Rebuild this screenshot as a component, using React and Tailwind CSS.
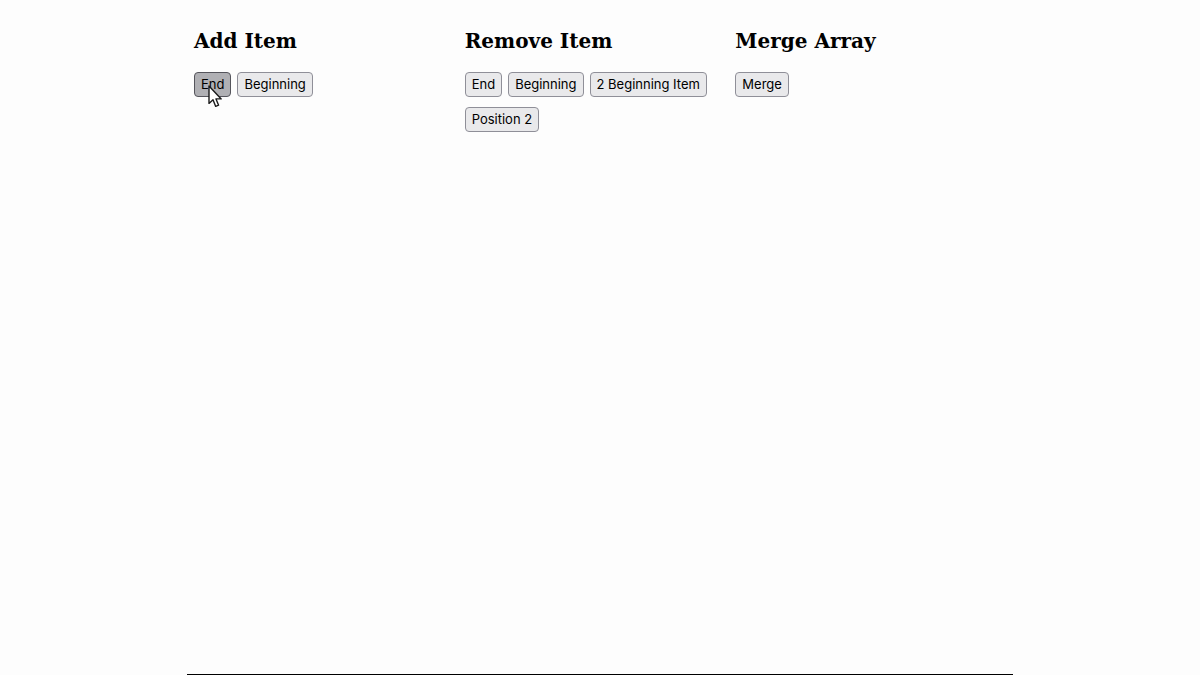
const columns = [
  {
    title: 'Add Item',
    actions: [{ label: 'End', pressed: true }, { label: 'Beginning' }],
  },
  {
    title: 'Remove Item',
    actions: [
      { label: 'End' },
      { label: 'Beginning' },
      { label: '2 Beginning Item' },
      { label: 'Position 2' },
    ],
  },
  {
    title: 'Merge Array',
    actions: [{ label: 'Merge' }],
  },
];

const Pointer = () => (
  <svg
    className="absolute left-[14px] top-[13px] z-10 pointer-events-none"
    width="14"
    height="23"
    viewBox="0 0 14 23"
    aria-hidden="true"
  >
    <path
      d="M1 1V18.4L5 14.8L7.7 21.4L10.6 20.2L8 13.9H13.2Z"
      fill="#fff"
      stroke="#1a1a1a"
      strokeWidth="1.4"
      strokeLinejoin="round"
    />
  </svg>
);

const ActionButton = ({ label, pressed }) => (
  <div className="relative">
    <button
      type="button"
      className={`block h-[25px] px-[6px] rounded-[4px] border text-[13px] leading-[22px] pb-px text-black ${
        pressed ? 'bg-[#b0b0b4] border-[#55555c]' : 'bg-[#e9e9eb] border-[#8f8f98] active:bg-[#b0b0b4]'
      }`}
    >
      {label}
    </button>
    {pressed && <Pointer />}
  </div>
);

const App = () => {
  return (
    <div className="min-h-screen flex justify-center bg-[#fdfdfd] font-['Inter',sans-serif]">
      <main className="w-full max-w-[826px] px-[7px] pt-7 grid grid-cols-3 content-start border-b border-black">
        {columns.map((column) => (
          <section key={column.title}>
            <h2 className="mb-[18px] text-[20px] leading-[26px] font-bold text-black font-['DejaVu_Serif',serif]">
              {column.title}
            </h2>
            <div className="flex flex-wrap gap-x-[6px] gap-y-[10px]">
              {column.actions.map((action) => (
                <ActionButton key={action.label} {...action} />
              ))}
            </div>
          </section>
        ))}
      </main>
    </div>
  );
};

export default App;
